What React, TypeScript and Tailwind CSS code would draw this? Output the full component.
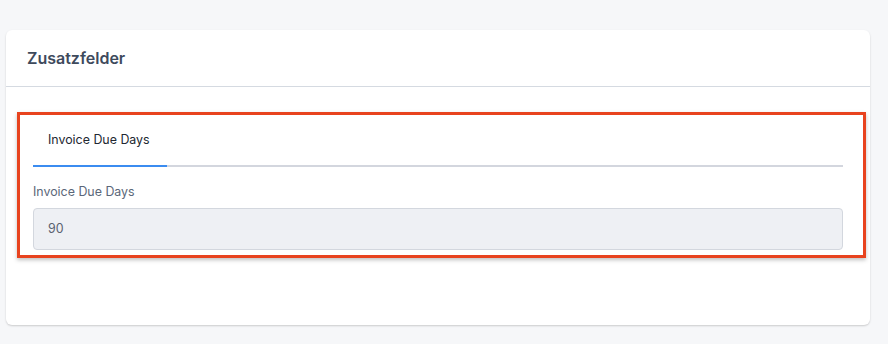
import React from "react";

const App = () => {
  return (
    <div className="min-h-screen w-full bg-[#f6f7f9] pt-[30px] font-['Inter',sans-serif]">
      <div className="ml-[6px] w-[864px] h-[295px] rounded-[6px] bg-white shadow-[0_1px_2px_rgba(0,0,0,0.18)]">
        <div className="h-[57px] flex items-center pl-[21px] border-b border-[#d5dae1]">
          <h2 className="text-[16px] font-semibold text-[#3e4a5c]">Zusatzfelder</h2>
        </div>
        <div className="pt-[25px] pl-[11px] pr-[4px]">
          <div className="border-[3px] border-[#e8431e] shadow-[0_2px_4px_rgba(0,0,0,0.25)] pl-[13px] pr-[20px] pb-[5px]">
            <div className="flex border-b-2 border-[#d3d6de]">
              <div className="h-[52px] w-[134px] flex items-center pl-[15px] border-b-2 border-[#3b8cf0] -mb-[2px] text-[12.4px] text-[#222831]">
                Invoice Due Days
              </div>
            </div>
            <label className="block mt-[17px] mb-[8px] text-[12.4px] leading-[16px] text-[#5b6779]">
              Invoice Due Days
            </label>
            <div className="h-[42px] rounded-[4px] border border-[#d3d7de] bg-[#eef0f4] flex items-center pl-[14px] text-[12.4px] text-[#5a6270]">
              90
            </div>
          </div>
        </div>
      </div>
    </div>
  );
};

export default App;
